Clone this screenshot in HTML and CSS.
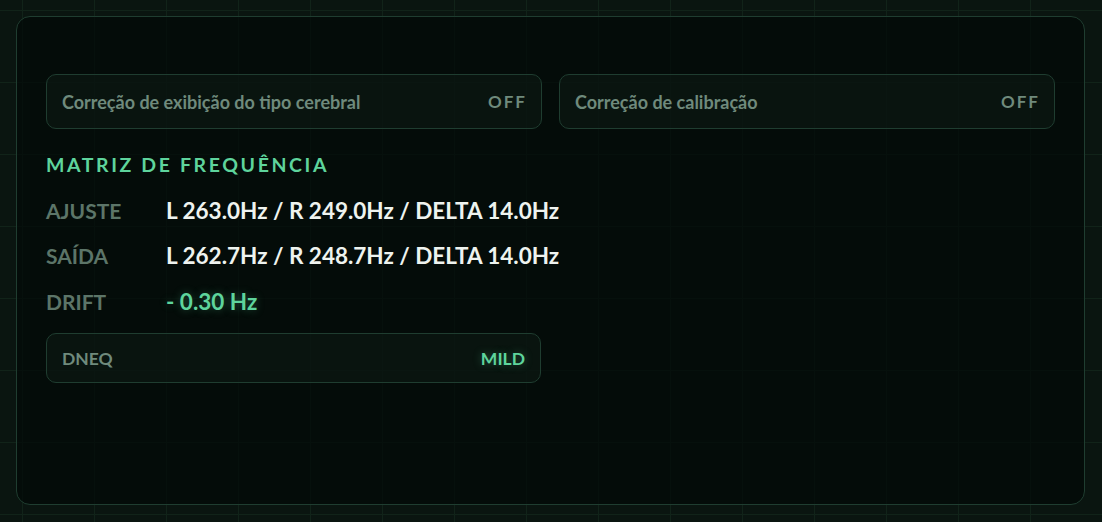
FILE: index.html
```html
<!DOCTYPE html>
<html lang="pt">
<head>
    <meta charset="UTF-8">
    <meta name="viewport" content="width=device-width, initial-scale=1.0">
    <title>Matriz de Frequência</title>
    <link rel="stylesheet" href="styles.css">
</head>
<body>
    <div class="panel">
        <div class="toggle-row">
            <div class="toggle">
                <span class="toggle-label">Correção de exibição do tipo cerebral</span>
                <span class="toggle-state">OFF</span>
            </div>
            <div class="toggle">
                <span class="toggle-label">Correção de calibração</span>
                <span class="toggle-state">OFF</span>
            </div>
        </div>

        <h2 class="section-title">MATRIZ DE FREQUÊNCIA</h2>

        <div class="freq-table">
            <div class="freq-row">
                <span class="freq-key">AJUSTE</span>
                <span class="freq-value">L 263.0Hz / R 249.0Hz / DELTA 14.0Hz</span>
            </div>
            <div class="freq-row">
                <span class="freq-key">SAÍDA</span>
                <span class="freq-value">L 262.7Hz / R 248.7Hz / DELTA 14.0Hz</span>
            </div>
            <div class="freq-row">
                <span class="freq-key">DRIFT</span>
                <span class="freq-value glow">- 0.30 Hz</span>
            </div>
        </div>

        <div class="status-box">
            <span class="status-label">DNEQ</span>
            <span class="status-value glow">MILD</span>
        </div>
    </div>
</body>
</html>
```

FILE: styles.css
```css
:root {
    --page-bg: #0a1510;
    --panel-bg: rgba(3, 10, 7, 0.72);
    --grid-line: #112319;
    --border: #1f3d30;
    --muted: #6f8a7c;
    --label: #5c7568;
    --green: #5ed49c;
    --text: #eef3ef;
}

* {
    box-sizing: border-box;
}

body {
    margin: 0;
    min-height: 100vh;
    padding: 16px 17px 17px 16px;
    font-family: Lato, 'Noto Sans', sans-serif;
    background-color: var(--page-bg);
    background-image:
        linear-gradient(to right, var(--grid-line) 1px, transparent 1px),
        linear-gradient(to bottom, var(--grid-line) 1px, transparent 1px);
    background-size: 72px 72px;
    background-position: 22px 10px;
}

.panel {
    height: 489px;
    border: 1px solid var(--border);
    border-radius: 14px;
    background: var(--panel-bg);
    padding: 57px 29px 0 29px;
}

.toggle-row {
    display: grid;
    grid-template-columns: 1fr 1fr;
    gap: 17px;
}

.toggle {
    height: 55px;
    display: flex;
    align-items: center;
    justify-content: space-between;
    padding: 0 14px 0 15px;
    border: 1px solid var(--border);
    border-radius: 10px;
    background: rgba(16, 32, 25, 0.45);
}

.toggle-label {
    font-size: 18px;
    font-weight: 700;
    color: var(--muted);
}

.toggle-state {
    font-size: 17px;
    font-weight: 700;
    letter-spacing: 2px;
    color: var(--muted);
}

.section-title {
    margin: 24px 0 0;
    font-size: 19.5px;
    font-weight: 700;
    letter-spacing: 2.6px;
    color: var(--green);
    line-height: 24px;
}

.freq-table {
    margin-top: 21px;
    display: flex;
    flex-direction: column;
    gap: 21.5px;
}

.freq-row {
    display: flex;
    align-items: center;
    height: 24px;
}

.freq-key {
    width: 120px;
    font-size: 21px;
    font-weight: 700;
    color: var(--label);
}

.freq-value {
    font-size: 22.5px;
    font-weight: 700;
    color: var(--text);
}

.glow {
    color: var(--green);
    text-shadow: 0 0 8px rgba(94, 212, 156, 0.35);
}

.status-box {
    width: 495px;
    height: 50px;
    margin-top: 20px;
    display: flex;
    align-items: center;
    justify-content: space-between;
    padding: 0 15px;
    border: 1px solid var(--border);
    border-radius: 10px;
    background: rgba(16, 32, 25, 0.45);
}

.status-label {
    font-size: 17.5px;
    font-weight: 700;
    color: var(--muted);
}

.status-value {
    font-size: 17.5px;
    font-weight: 700;
}
```
